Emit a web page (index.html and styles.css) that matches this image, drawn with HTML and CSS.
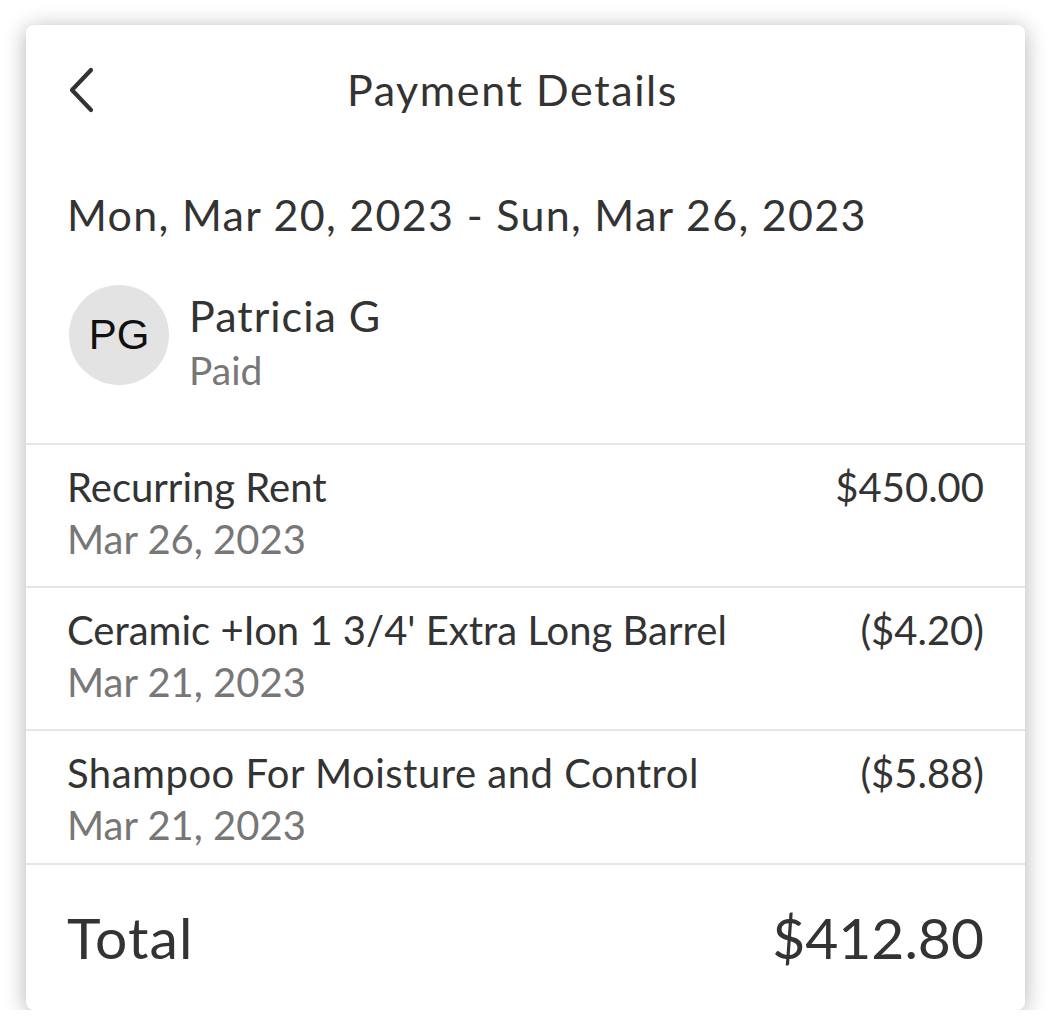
FILE: index.html
```html
<!DOCTYPE html>
<html>
<head>
<meta charset="utf-8">
<link rel="stylesheet" href="styles.css">
</head>
<body>
<div class="card">
  <div class="header">
    <svg class="back" width="30" height="46" viewBox="0 0 30 46"><path d="M24 3 L5 23 L24 43" fill="none" stroke="#333" stroke-width="4.2" stroke-linecap="round" stroke-linejoin="round"/></svg>
    <div class="title">Payment Details</div>
    <div class="spacer"></div>
  </div>
  <div class="range">Mon, Mar 20, 2023 - Sun, Mar 26, 2023</div>
  <div class="person">
    <div class="avatar">PG</div>
    <div class="pinfo">
      <div class="pname">Patricia G</div>
      <div class="pstatus">Paid</div>
    </div>
  </div>
  <div class="items">
    <div class="item">
      <div class="itext"><div class="iname">Recurring Rent</div><div class="idate">Mar 26, 2023</div></div>
      <div class="amount">$450.00</div>
    </div>
    <div class="item">
      <div class="itext"><div class="iname">Ceramic +Ion 1 3/4' Extra Long Barrel</div><div class="idate">Mar 21, 2023</div></div>
      <div class="amount">($4.20)</div>
    </div>
    <div class="item last">
      <div class="itext"><div class="iname wide">Shampoo For Moisture and Control</div><div class="idate">Mar 21, 2023</div></div>
      <div class="amount">($5.88)</div>
    </div>
  </div>
  <div class="total">
    <div class="tlabel">Total</div>
    <div class="tvalue">$412.80</div>
  </div>
</div>
</body>
</html>
```
FILE: styles.css
```css
html, body { margin: 0; padding: 0; background: #fff; }
body { font-family: Lato, "Open Sans", sans-serif; color: #333; }
.card {
  margin: 25px 0 0 26px;
  width: 999px;
  height: 985px;
  background: #fff;
  border-radius: 8px;
  box-shadow: 0 3px 22px rgba(0,0,0,0.3);
  box-sizing: border-box;
  overflow: hidden;
}
.header {
  display: grid;
  grid-template-columns: 30px 1fr 56px;
  align-items: center;
  height: 130px;
  padding: 0 41px;
}
.back { display: block; margin-left: 0; }
.title { text-align: center; font-size: 43px; line-height: 60px; letter-spacing: 1.6px; }
.range { padding: 0 41px; font-size: 43px; line-height: 60px; margin-top: 30px; letter-spacing: 1.3px; }
.person { display: flex; align-items: flex-start; gap: 20px; padding: 0 41px; margin-top: 40px; }
.avatar {
  width: 100px; height: 100px; border-radius: 50%;
  background: #e3e3e3; color: #111;
  font-family: "Liberation Sans", Arial, sans-serif; font-size: 42px;
  display: flex; align-items: center; justify-content: center;
  margin-left: 2px;
}
.pinfo { padding-top: 3px; }
.pname { font-size: 43px; line-height: 56px; letter-spacing: 1px; }
.pstatus { font-size: 39px; line-height: 52px; color: #777; }
.items { margin-top: 47px; border-top: 2px solid #e6e6e6; }
.item {
  display: flex; justify-content: space-between; align-items: flex-start;
  padding: 14px 41px 23px;
  border-bottom: 2px solid #e6e6e6;
}
.item.last { padding-bottom: 14px; }
.iname { font-size: 40px; line-height: 56px; }
.iname.wide { letter-spacing: 0.5px; }
.idate { font-size: 40px; line-height: 48px; color: #777; }
.amount { font-size: 40px; line-height: 56px; }
.total { display: flex; justify-content: space-between; align-items: center; padding: 22px 41px 0; }
.tlabel, .tvalue { font-size: 57px; line-height: 100px; }
.tlabel { letter-spacing: 1.2px; }
```
